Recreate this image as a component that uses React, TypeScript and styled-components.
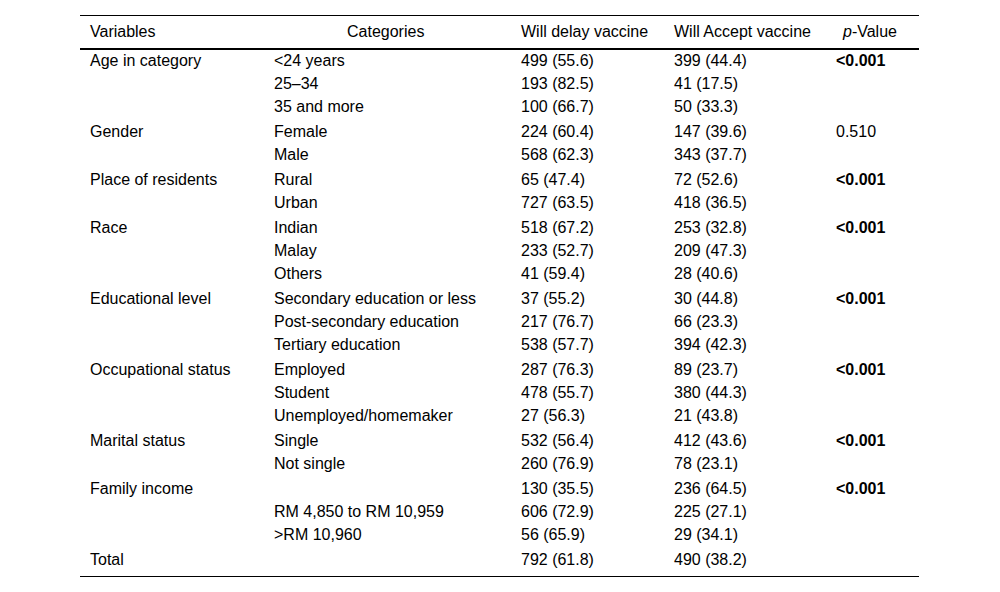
import React from "react";
import styled, { createGlobalStyle } from "styled-components";

const Global = createGlobalStyle`
  html, body { margin: 0; padding: 0; background: #ffffff; }
  body { font-family: "Liberation Sans", Arial, sans-serif; color: #000; }
`;

const Page = styled.div`
  padding: 15px 81px 0 80px;
`;

const Table = styled.table`
  width: 839px;
  border-collapse: collapse;
  table-layout: fixed;
  font-size: 16px;
  border-top: 1px solid #000;
  border-bottom: 1px solid #000;
`;

const HeadRow = styled.tr`
  border-bottom: 2px solid #000;
`;

const HeadCell = styled.th<{ $pad?: number }>`
  text-align: left;
  font-weight: normal;
  height: 32px;
  line-height: 32px;
  padding: 0 0 0 ${(p) => p.$pad ?? 10}px;
  vertical-align: top;
  white-space: nowrap;
`;

const Cell = styled.td<{ $last?: boolean }>`
  vertical-align: top;
  padding: 0 0 ${(p) => (p.$last ? 4 : 2)}px 10px;
  white-space: nowrap;
`;

const Line = styled.div<{ $bold?: boolean }>`
  height: 23px;
  line-height: 21px;
  font-weight: ${(p) => (p.$bold ? 700 : 400)};
`;

type Group = {
  variable: string;
  rows: [string, string, string][];
  p?: string;
  bold?: boolean;
};

const groups: Group[] = [
  {
    variable: "Age in category",
    rows: [
      ["<24 years", "499 (55.6)", "399 (44.4)"],
      ["25–34", "193 (82.5)", "41 (17.5)"],
      ["35 and more", "100 (66.7)", "50 (33.3)"],
    ],
    p: "<0.001",
    bold: true,
  },
  {
    variable: "Gender",
    rows: [
      ["Female", "224 (60.4)", "147 (39.6)"],
      ["Male", "568 (62.3)", "343 (37.7)"],
    ],
    p: "0.510",
  },
  {
    variable: "Place of residents",
    rows: [
      ["Rural", "65 (47.4)", "72 (52.6)"],
      ["Urban", "727 (63.5)", "418 (36.5)"],
    ],
    p: "<0.001",
    bold: true,
  },
  {
    variable: "Race",
    rows: [
      ["Indian", "518 (67.2)", "253 (32.8)"],
      ["Malay", "233 (52.7)", "209 (47.3)"],
      ["Others", "41 (59.4)", "28 (40.6)"],
    ],
    p: "<0.001",
    bold: true,
  },
  {
    variable: "Educational level",
    rows: [
      ["Secondary education or less", "37 (55.2)", "30 (44.8)"],
      ["Post-secondary education", "217 (76.7)", "66 (23.3)"],
      ["Tertiary education", "538 (57.7)", "394 (42.3)"],
    ],
    p: "<0.001",
    bold: true,
  },
  {
    variable: "Occupational status",
    rows: [
      ["Employed", "287 (76.3)", "89 (23.7)"],
      ["Student", "478 (55.7)", "380 (44.3)"],
      ["Unemployed/homemaker", "27 (56.3)", "21 (43.8)"],
    ],
    p: "<0.001",
    bold: true,
  },
  {
    variable: "Marital status",
    rows: [
      ["Single", "532 (56.4)", "412 (43.6)"],
      ["Not single", "260 (76.9)", "78 (23.1)"],
    ],
    p: "<0.001",
    bold: true,
  },
  {
    variable: "Family income",
    rows: [
      ["", "130 (35.5)", "236 (64.5)"],
      ["RM 4,850 to RM 10,959", "606 (72.9)", "225 (27.1)"],
      [">RM 10,960", "56 (65.9)", "29 (34.1)"],
    ],
    p: "<0.001",
    bold: true,
  },
  {
    variable: "Total",
    rows: [["", "792 (61.8)", "490 (38.2)"]],
  },
];

const Italic = styled.span`
  font-style: italic;
`;

export default function App() {
  return (
    <Page>
      <Global />
      <Table>
        <colgroup>
          <col style={{ width: 184 }} />
          <col style={{ width: 247 }} />
          <col style={{ width: 153 }} />
          <col style={{ width: 162 }} />
          <col style={{ width: 93 }} />
        </colgroup>
        <thead>
          <HeadRow>
            <HeadCell>Variables</HeadCell>
            <HeadCell $pad={83}>Categories</HeadCell>
            <HeadCell>Will delay vaccine</HeadCell>
            <HeadCell>Will Accept vaccine</HeadCell>
            <HeadCell $pad={17}>
              <Italic>p</Italic>-Value
            </HeadCell>
          </HeadRow>
        </thead>
        <tbody>
          {groups.map((g, gi) => {
            const last = gi === groups.length - 1;
            return (
              <tr key={g.variable}>
                <Cell $last={last}>
                  <Line>{g.variable}</Line>
                </Cell>
                <Cell $last={last}>
                  {g.rows.map((r, i) => (
                    <Line key={i}>{r[0]}</Line>
                  ))}
                </Cell>
                <Cell $last={last}>
                  {g.rows.map((r, i) => (
                    <Line key={i}>{r[1]}</Line>
                  ))}
                </Cell>
                <Cell $last={last}>
                  {g.rows.map((r, i) => (
                    <Line key={i}>{r[2]}</Line>
                  ))}
                </Cell>
                <Cell $last={last}>
                  <Line $bold={g.bold}>{g.p ?? ""}</Line>
                </Cell>
              </tr>
            );
          })}
        </tbody>
      </Table>
    </Page>
  );
}
